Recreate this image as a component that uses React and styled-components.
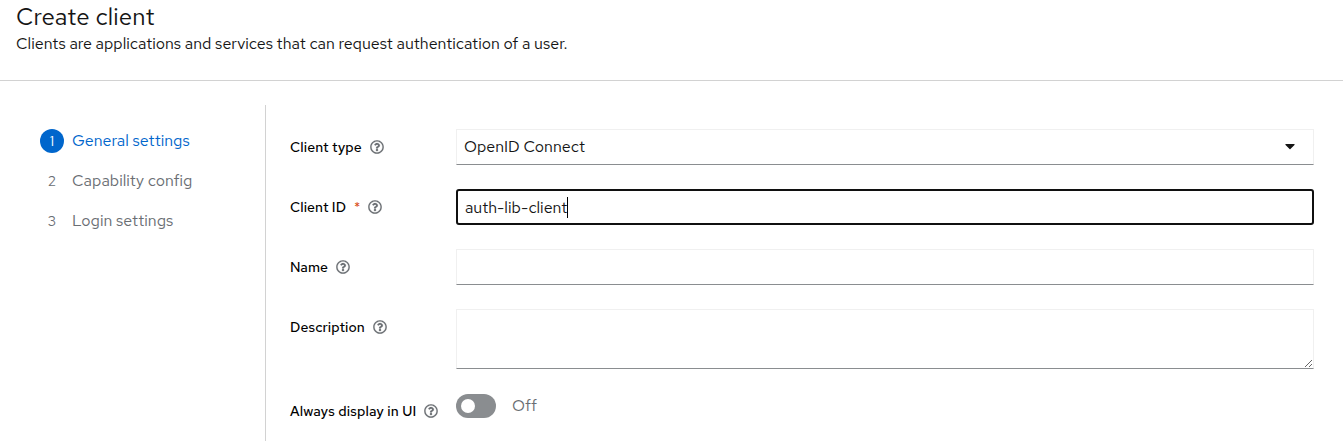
import React from "react";
import styled, { createGlobalStyle } from "styled-components";
import { FaRegQuestionCircle, FaCaretDown } from "react-icons/fa";

const GlobalStyle = createGlobalStyle`
  *, *::before, *::after { box-sizing: border-box; }
  body {
    margin: 0;
    background: #fff;
    color: #151515;
    font-family: "Red Hat Text", Inter, "Open Sans", sans-serif;
    font-size: 16px;
    font-weight: 400;
    line-height: 24px;
    overflow: hidden;
  }
`;

const Page = styled.div`
  display: flex;
  flex-direction: column;
  height: 441px;
  overflow: hidden;
`;

const Header = styled.header`
  height: 81px;
  padding: 0 16px;
  border-bottom: 1px solid #d2d2d2;
`;

const Title = styled.h1`
  margin: 0;
  padding-top: 1px;
  font-size: 24px;
  font-weight: 400;
  line-height: 31px;
  letter-spacing: 0.16px;
`;

const Subtitle = styled.p`
  margin: 0;
  line-height: 24px;
`;

const Text = styled.span`
  white-space: nowrap;
  letter-spacing: ${(p) => p.$track || 0}px;
`;

const Wizard = styled.div`
  display: flex;
  flex: 1;
  padding-top: 24px;
`;

const Steps = styled.nav`
  display: flex;
  flex-direction: column;
  gap: 16px;
  width: 266px;
  padding: 24px 0 0 40px;
  border-right: 1px solid #d2d2d2;
`;

const Step = styled.a`
  display: flex;
  align-items: center;
  gap: 8px;
  height: 24px;
  color: ${(p) => (p.$active ? "#0066cc" : "#6a6e73")};
`;

const StepNumber = styled.span`
  display: flex;
  align-items: center;
  justify-content: center;
  width: 24px;
  height: 24px;
  border-radius: 50%;
  font-size: 14px;
  color: ${(p) => (p.$active ? "#fff" : "#6a6e73")};
  background: ${(p) => (p.$active ? "#0066cc" : "transparent")};
`;

const Form = styled.form`
  display: flex;
  flex: 1;
  flex-direction: column;
  gap: 24px;
  padding: 24px 29px 0 24px;
`;

const Row = styled.div`
  display: grid;
  grid-template-columns: 166px 1fr;
  align-items: start;
`;

const Label = styled.label`
  display: flex;
  align-items: center;
  height: 18px;
  margin-top: 9px;
  color: #000;
  font-size: 14px;
  font-weight: 500;
`;

const Required = styled.span`
  margin-left: 8px;
  color: #d9501b;
  font-size: 14px;
  font-weight: 400;
  line-height: 18px;
`;

const Help = styled(FaRegQuestionCircle)`
  width: 14px;
  height: 14px;
  margin-left: 8px;
  color: #6a6e73;
  stroke: #6a6e73;
  stroke-width: 6px;
`;

const Control = styled.div`
  display: flex;
  align-items: center;
  height: 36px;
  padding: 0 ${(p) => (p.$focused ? 7 : 18)}px 0 7px;
  border: 1px solid #f0f0f0;
  border-bottom-color: #8a8d90;
  ${(p) =>
    p.$focused &&
    `
    padding-top: 1px;
    border: 2px solid #101010;
    border-radius: 3px;
  `}
`;

const Caret = styled.span`
  width: 1px;
  height: 21px;
  background: #000;
`;

const Arrow = styled(FaCaretDown)`
  width: 10px;
  height: 16px;
  margin: -2px 0 0 auto;
`;

const Area = styled.textarea`
  display: block;
  width: 100%;
  height: 60px;
  border: 1px solid #f0f0f0;
  border-bottom-color: #8a8d90;
  border-radius: 0;
  background: #fff;
  outline: none;
  resize: vertical;
`;

const SwitchRow = styled.div`
  display: flex;
  align-items: center;
  gap: 16px;
  height: 24px;
  margin-top: 1px;
  color: #6a6e73;
`;

const Switch = styled.span`
  display: flex;
  align-items: center;
  width: 40px;
  height: 24px;
  padding-left: 5px;
  border-radius: 12px;
  background: #8a8d90;
`;

const Knob = styled.span`
  width: 14px;
  height: 14px;
  border-radius: 50%;
  background: #fff;
`;

const steps = ["General settings", "Capability config", "Login settings"];

function Field({ label, track, required, children }) {
  return (
    <Row>
      <Label>
        <Text $track={track}>{label}</Text>
        {required && <Required>*</Required>}
        <Help />
      </Label>
      {children}
    </Row>
  );
}

export default function App() {
  return (
    <Page>
      <GlobalStyle />
      <Header>
        <Title>Create client</Title>
        <Subtitle>
          Clients are applications and services that can request authentication of a user.
        </Subtitle>
      </Header>
      <Wizard>
        <Steps>
          {steps.map((name, i) => (
            <Step key={name} $active={i === 0}>
              <StepNumber $active={i === 0}>{i + 1}</StepNumber>
              <Text>{name}</Text>
            </Step>
          ))}
        </Steps>
        <Form>
          <Field label="Client type" track={0.12}>
            <Control>
              <Text>OpenID Connect</Text>
              <Arrow />
            </Control>
          </Field>
          <Field label="Client ID" track={0.08} required>
            <Control $focused>
              <Text>auth-lib-client</Text>
              <Caret />
            </Control>
          </Field>
          <Field label="Name">
            <Control />
          </Field>
          <Field label="Description" track={0.1}>
            <Area />
          </Field>
          <Field label="Always display in UI" track={0.15}>
            <SwitchRow>
              <Switch>
                <Knob />
              </Switch>
              <Text>Off</Text>
            </SwitchRow>
          </Field>
        </Form>
      </Wizard>
    </Page>
  );
}
